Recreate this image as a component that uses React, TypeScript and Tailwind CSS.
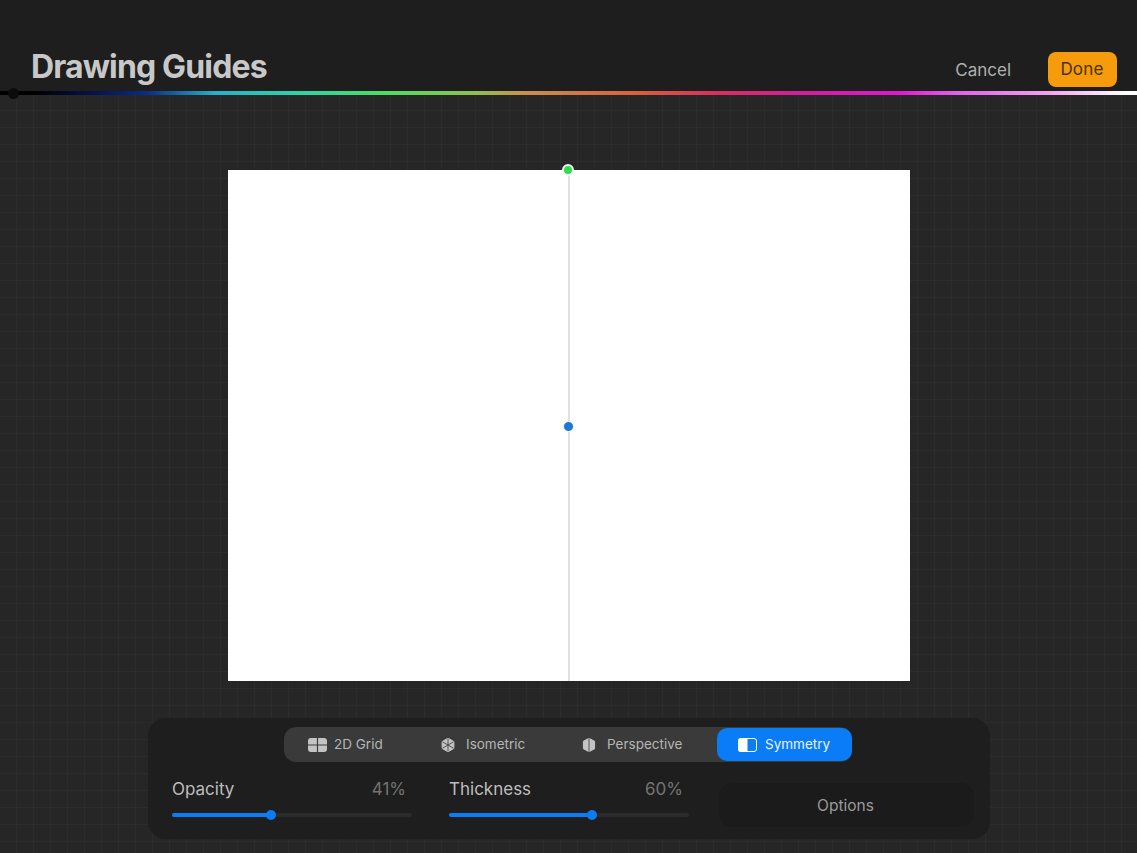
const TabIcon = ({ kind }: { kind: string }) => {
    if (kind === "grid") {
        return (
            <svg width="19" height="14" viewBox="0 0 19 14">
                <path d="M3 0h5.9v6.4H0V3a3 3 0 0 1 3-3zM10.1 0H16a3 3 0 0 1 3 3v3.4h-8.9zM0 7.6h8.9V14H3a3 3 0 0 1-3-3zM10.1 7.6H19V11a3 3 0 0 1-3 3h-5.9z" fill="#c4c4c4" />
            </svg>
        );
    }
    if (kind === "iso") {
        return (
            <svg width="14" height="14" viewBox="0 0 14 14">
                <path d="M7 0.2 12.9 3.6v6.8L7 13.8 1.1 10.4V3.6z" fill="#c4c4c4" stroke="#c4c4c4" strokeLinejoin="round" />
                <path d="M7 7V0.5M7 7l5.6-3.2M7 7 1.4 3.8M7 7v6.5M7 7l5.6 3.2M7 7l-5.6 3.2" stroke="#3a3a3a" strokeWidth="0.8" />
            </svg>
        );
    }
    if (kind === "persp") {
        return (
            <svg width="14" height="14" viewBox="0 0 14 14">
                <path d="M7 0.3 12.6 3.2v7.6L7 13.7 1.4 10.8V3.2z" fill="#c4c4c4" stroke="#c4c4c4" strokeLinejoin="round" />
                <path d="M7 0v14" stroke="#3a3a3a" strokeWidth="0.8" />
            </svg>
        );
    }
    return (
        <svg width="19" height="14" viewBox="0 0 19 14">
            <rect x="0.5" y="0.5" width="18" height="13" rx="2.5" fill="none" stroke="#fff" />
            <path d="M3 0h6.5v14H3a3 3 0 0 1-3-3V3a3 3 0 0 1 3-3z" fill="#fff" />
        </svg>
    );
};

const Slider = ({ label, value, fill, width }: { label: string; value: string; fill: number; width: string }) => (
    <div className={`flex flex-col ${width}`}>
        <div className="flex items-center justify-between pr-[6px] pt-[2px] h-[24px]">
            <span className="text-[17px] text-[#bdbdbd]">{label}</span>
            <span className="text-[17px] text-[#737373]">{value}</span>
        </div>
        <div className="relative mt-[12px] h-[4px] rounded-full bg-[#2b2b2b]">
            <div className="h-full rounded-full bg-[#0a7cf5]" style={{ width: fill }} />
            <div className="absolute top-[-3px] h-[10px] w-[10px] rounded-full bg-[#0a7cf5]" style={{ left: fill - 5 }} />
        </div>
    </div>
);

export default function App() {
    return (
        <div className="flex h-[853px] w-[1137px] flex-col overflow-hidden bg-[#262626] font-['Inter',sans-serif]">
            {/* Header */}
            <div className="flex h-[91px] items-end justify-between bg-[#1e1e1e] pl-[31px] pr-[20px]">
                <h1 className="mb-[4px] text-[32px] leading-[40px] font-bold tracking-[-0.85px] text-[#c8c8c8]">Drawing Guides</h1>
                <div className="mb-[4px] flex items-center gap-[37px]">
                    <button className="pt-[2px] text-[17px] text-[#b0b0b0]">Cancel</button>
                    <button className="flex h-[35px] w-[69px] items-center justify-center rounded-[8px] bg-[#f59b0c] pt-[1px] pr-[1px] text-[17px] tracking-[0.2px] text-[#4b3008]">Done</button>
                </div>
            </div>

            {/* Colour bar */}
            <div className="relative h-[4px] bg-[linear-gradient(90deg,#000_0%,#000_3%,#04124a_8%,#0a2d86_13%,#2bb0c8_19%,#2bd3a8_26%,#4fdc62_34%,#8fc050_42%,#c89050_46%,#d8603c_56%,#d8305c_63%,#d0209a_70%,#e018d0_79%,#e060e8_84%,#f0a0f0_92%,#fff_99%)]">
                <div className="absolute left-[8px] top-[-3px] h-[11px] w-[11px] rounded-full bg-[#0b0b0b]" />
            </div>

            {/* Canvas area */}
            <div className="flex flex-1 flex-col bg-[linear-gradient(#2c2c2c_1px,transparent_1px),linear-gradient(90deg,#2c2c2c_1px,transparent_1px)] bg-[size:17px_17px] bg-[position:16px_15px]">
                <div className="relative ml-[228px] mt-[75px] h-[511px] w-[682px] bg-white">
                    <div className="absolute left-[340px] top-0 h-full w-[2px] bg-[#e0e0e0]" />
                    <div className="absolute left-[334px] top-[-6px] h-[12px] w-[12px] rounded-full border-2 border-[#f2f2f2] bg-[#2fdc4f]" />
                    <div className="absolute left-[335px] top-[251px] h-[9px] w-[9px] rounded-full border border-white bg-[#1e78d2] box-content" />
                </div>

                {/* Bottom panel */}
                <div className="ml-[148px] mt-[37px] flex h-[121px] w-[842px] flex-col rounded-[18px] bg-[#1e1e1e] pt-[9px]">
                    <div className="ml-[136px] flex h-[35px] w-[568px] items-center rounded-[12px] bg-[#3a3a3a] text-[13.5px] text-[#b5b5b5]">
                        <div className="flex w-[136px] items-center pl-[24px] gap-[7px]"><TabIcon kind="grid" />2D Grid</div>
                        <div className="flex w-[140px] items-center pl-[21px] gap-[11px]"><TabIcon kind="iso" />Isometric</div>
                        <div className="flex w-[157px] items-center pl-[22px] gap-[11px]"><TabIcon kind="persp" />Perspective</div>
                        <div className="flex h-[33px] w-[135px] items-center gap-[8px] rounded-[10px] bg-[#0a7cf5] pl-[21px] text-[#eaf3ff]"><TabIcon kind="sym" />Symmetry</div>
                    </div>
                    <div className="mt-[15px] flex pl-[24px]">
                        <Slider label="Opacity" value="41%" fill={99} width="w-[240px]" />
                        <div className="ml-[37px]"><Slider label="Thickness" value="60%" fill={143} width="w-[240px]" /></div>
                        <button className="ml-[30px] mt-[6px] h-[44px] w-[255px] rounded-[14px] bg-[#1b1b1b] pt-[2px] pr-[2px] text-[15.5px] text-[#9a9a9a]">Options</button>
                    </div>
                </div>
            </div>
        </div>
    );
}
